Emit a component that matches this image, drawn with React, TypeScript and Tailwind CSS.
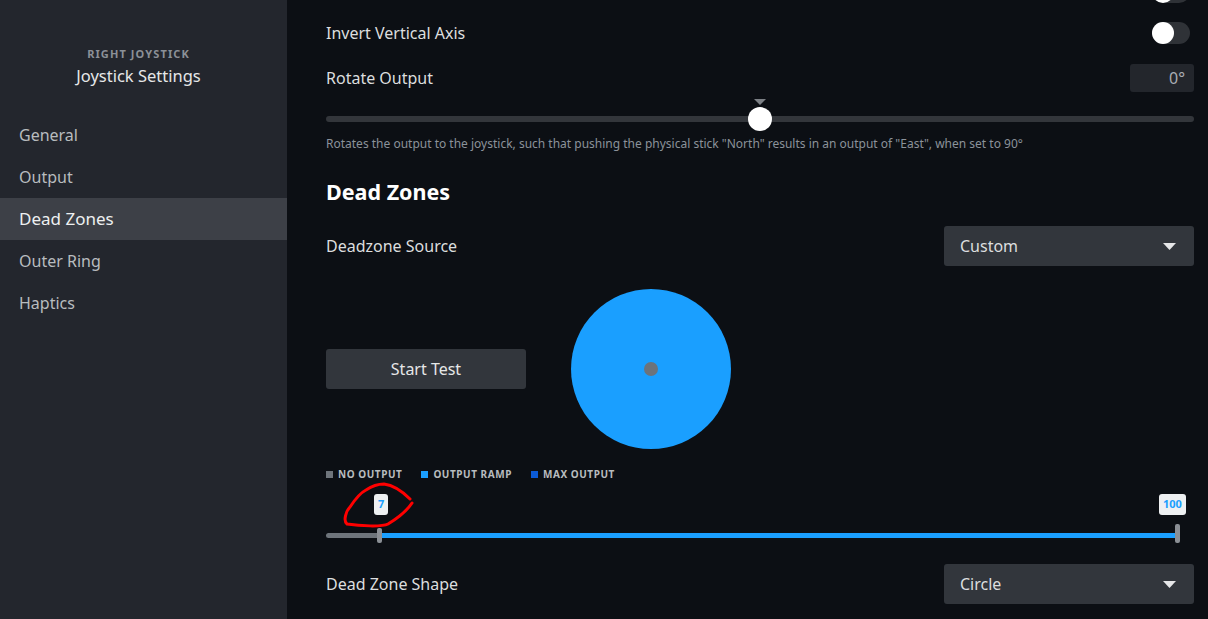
import React from 'react';

/* ------------------ DATA ------------------ */
const navItems = ['General', 'Output', 'Dead Zones', 'Outer Ring', 'Haptics'];

const legend = [
  { label: 'NO OUTPUT', color: 'bg-[#6e747b]' },
  { label: 'OUTPUT RAMP', color: 'bg-[#1a9fff]' },
  { label: 'MAX OUTPUT', color: 'bg-[#0b5ad6]' },
];

/* ------------------ PIECES ------------------ */
function Toggle() {
  return (
    <div className="w-[38px] h-[22px] rounded-full bg-[#2f3237] relative">
      <div className="absolute left-0 top-0 w-[22px] h-[22px] rounded-full bg-white" />
    </div>
  );
}

function Dropdown({ value }: { value: string }) {
  return (
    <div className="w-[250px] h-[40px] rounded-[3px] bg-[#32363c] flex items-center justify-between pl-4 pr-[18px]">
      <span className="text-[16px] text-[#dcdedf]">{value}</span>
      <svg width="13" height="7" viewBox="0 0 13 7">
        <path d="M0 0 H13 L6.5 7 Z" fill="#e6e7e8" />
      </svg>
    </div>
  );
}

function ValueTag({ value }: { value: string }) {
  return (
    <div className="h-[21px] px-[4px] rounded-[3px] bg-[#eef0f2] flex items-center justify-center text-[11px] font-bold text-[#1a9fff]">
      {value}
    </div>
  );
}

/* ------------------ APP ------------------ */
export default function App() {
  return (
    <div
      className="w-[1208px] h-[619px] overflow-hidden flex bg-[#0c0f14] text-[#dcdedf]"
      style={{ fontFamily: '"Noto Sans", "Open Sans", sans-serif' }}
    >
      {/* SIDEBAR */}
      <aside className="w-[287px] shrink-0 h-full bg-[#23262d] flex flex-col">
        <div className="pt-[46px] pr-[10px] flex flex-col items-center">
          <div className="text-[11px] font-bold tracking-[1.1px] text-[#8b9097] leading-[16px]">
            RIGHT JOYSTICK
          </div>
          <div className="text-[16.5px] text-[#e6e7e8] leading-[22px] mt-[3px]">
            Joystick Settings
          </div>
        </div>
        <nav className="mt-[27px] flex flex-col">
          {navItems.map(item =>
            item === 'Dead Zones' ? (
              <div
                key={item}
                className="h-[42px] flex items-center pl-[19px] bg-[#3d4047] text-[17px] text-[#eef0f1]"
              >
                {item}
              </div>
            ) : (
              <div
                key={item}
                className="h-[42px] flex items-center pl-[19px] text-[16px] text-[#b8bcbf]"
              >
                {item}
              </div>
            )
          )}
        </nav>
      </aside>

      {/* MAIN */}
      <main className="flex-1 pl-[39px] pr-[14px] flex flex-col">
        {/* cut-off toggle row */}
        <div className="-mt-[19px] h-[22px] flex justify-end pr-[4px]">
          <Toggle />
        </div>

        <div className="mt-[19px] h-[22px] flex items-center justify-between pr-[4px]">
          <span className="text-[16px]">Invert Vertical Axis</span>
          <Toggle />
        </div>

        <div className="mt-[20px] h-[28px] flex items-center justify-between">
          <span className="text-[16px]">Rotate Output</span>
          <div className="w-[64px] h-[28px] rounded-[3px] bg-[#23262c] flex items-center justify-end pr-[9px] text-[16px] text-[#a9adb3]">
            0°
          </div>
        </div>

        {/* rotate slider */}
        <div className="mt-[7px] h-[32px] relative">
          <div className="absolute left-0 right-0 top-[17px] h-[6px] rounded-full bg-[#33363b]" />
          <div className="absolute left-[422px] top-0 w-[24px] flex flex-col items-center">
            <svg width="12" height="6" viewBox="0 0 12 6">
              <path d="M0 0 H12 L6 6 Z" fill="#7c8085" />
            </svg>
            <div className="mt-[2px] w-[24px] h-[24px] rounded-full bg-white" />
          </div>
        </div>

        <p className="mt-[5px] text-[12px] leading-[16px] text-[#8b929a]">
          Rotates the output to the joystick, such that pushing the physical stick "North" results in an output of "East", when set to 90°
        </p>

        <h2 className="mt-[26px] text-[21.5px] leading-[28px] font-bold text-white">
          Dead Zones
        </h2>

        <div className="mt-[20px] flex items-center justify-between">
          <span className="text-[16px]">Deadzone Source</span>
          <Dropdown value="Custom" />
        </div>

        {/* test + preview */}
        <div className="mt-[23px] flex items-center gap-[45px]">
          <div className="w-[200px] h-[40px] rounded-[3px] bg-[#32363c] flex items-center justify-center text-[16px] text-[#e6e7e8]">
            Start Test
          </div>
          <div className="w-[160px] h-[160px] rounded-full bg-[#1a9fff] flex items-center justify-center">
            <div className="w-[14px] h-[14px] rounded-full bg-[#6c737b]" />
          </div>
        </div>

        {/* legend */}
        <div className="mt-[18px] flex items-center gap-[19px]">
          {legend.map(l => (
            <div key={l.label} className="flex items-center gap-[5px]">
              <div className={`w-[7px] h-[7px] ${l.color}`} />
              <span className="text-[10px] leading-[14px] font-bold tracking-[0.55px] text-[#b8bcbf]">
                {l.label}
              </span>
            </div>
          ))}
        </div>

        {/* dead zone range slider */}
        <div className="mt-[13px] h-[50px] relative">
          <div className="absolute left-[48px] top-0">
            <ValueTag value="7" />
          </div>
          <div className="absolute left-[833px] top-0">
            <ValueTag value="100" />
          </div>
          <div className="absolute left-0 top-[39px] w-[52px] h-[5px] rounded-l-full bg-[#6e747b]" />
          <div className="absolute left-[54px] right-[19px] top-[39px] h-[5px] bg-[#1a9fff]" />
          <div className="absolute left-[51px] top-[34px] w-[5px] h-[15px] rounded-[2px] bg-[#8b8f95]" />
          <div className="absolute left-[849px] top-[30px] w-[5px] h-[19px] rounded-[2px] bg-[#8b8f95]" />

          {/* red annotation loop */}
          <svg
            className="absolute left-[14px] -top-[13px] pointer-events-none"
            width="76"
            height="48"
            viewBox="340 480 76 48"
          >
            <path
              d="M412 502 C408 508 398 517 388 523 C382 526 360 525 347 523 C343 520 346 510 350 506 C354 500 360 492 366 489 C372 485 378 483 384 483 C392 484 402 490 410 498"
              fill="none"
              stroke="#f00"
              strokeWidth="3"
              strokeLinecap="round"
            />
          </svg>
        </div>

        <div className="mt-[20px] flex items-center justify-between">
          <span className="text-[16px]">Dead Zone Shape</span>
          <Dropdown value="Circle" />
        </div>
      </main>
    </div>
  );
}
